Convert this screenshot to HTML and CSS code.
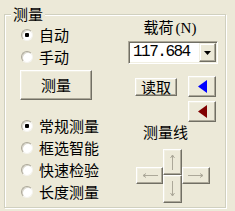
FILE: index.html
```html
<!DOCTYPE html>
<html>
<head>
<meta charset="utf-8">
<link rel="stylesheet" href="styles.css">
</head>
<body>
<div class="group">
  <span class="legend">测量</span>
  <div class="cols">
    <div class="left">
      <label class="opt"><span class="radio on"></span><span>自动</span></label>
      <label class="opt"><span class="radio"></span><span>手动</span></label>
      <div class="btn measure">测量</div>
      <div class="modes">
        <label class="opt"><span class="radio on"></span><span>常规测量</span></label>
        <label class="opt"><span class="radio"></span><span>框选智能</span></label>
        <label class="opt"><span class="radio"></span><span>快速检验</span></label>
        <label class="opt"><span class="radio"></span><span>长度测量</span></label>
      </div>
    </div>
    <div class="right">
      <div class="load-label">载荷<span class="latin">(N)</span></div>
      <div class="combo">
        <span class="combo-val">117.684</span>
        <span class="combo-btn"><svg width="7" height="4" viewBox="0 0 7 4"><path d="M0 0H7L3.5 4Z" fill="#000"/></svg></span>
      </div>
      <div class="read-row">
        <div class="btn read">读取</div>
        <div class="btn arrow"><svg width="9" height="13" viewBox="0 0 9 13"><path d="M0 6.5L9 0V13Z" fill="#0000ff"/></svg></div>
      </div>
      <div class="btn arrow red"><svg width="9" height="13" viewBox="0 0 9 13"><path d="M0 6.5L9 0V13Z" fill="#800000"/></svg></div>
      <div class="line-label">测量线</div>
      <div class="cross">
        <div class="btn up"><svg width="5" height="16" viewBox="0 0 5 16"><path d="M2.5 1V16M0.5 4L2.5 1L4.5 4" stroke="#aca899" fill="none" stroke-width="1"/></svg></div>
        <div class="btn lt"><svg width="16" height="5" viewBox="0 0 16 5"><path d="M1 2.5H16M4 0.5L1 2.5L4 4.5" stroke="#aca899" fill="none" stroke-width="1"/></svg></div>
        <div class="btn rt"><svg width="16" height="5" viewBox="0 0 16 5"><path d="M0 2.5H15M12 0.5L15 2.5L12 4.5" stroke="#aca899" fill="none" stroke-width="1"/></svg></div>
        <div class="btn dn"><svg width="5" height="16" viewBox="0 0 5 16"><path d="M2.5 0V15M0.5 12L2.5 15L4.5 12" stroke="#aca899" fill="none" stroke-width="1"/></svg></div>
      </div>
    </div>
  </div>
</div>
</body>
</html>
```
FILE: styles.css
```css
html, body {
  margin: 0;
  padding: 0;
  background: #ece9d8;
}
body {
  width: 235px;
  height: 211px;
  padding: 14px 0 0 4px;
  box-sizing: border-box;
  font-family: "Noto Sans CJK SC", "Noto Sans", sans-serif;
  font-size: 15px;
  color: #000;
  overflow: hidden;
}
.group {
  position: relative;
  width: 222px;
  height: 194px;
  box-sizing: border-box;
  border: 1px solid #d0d0bf;
  box-shadow: inset 1px 1px 0 #fff, 1px 1px 0 #fff;
}
.legend {
  position: absolute;
  top: -10px;
  left: 6px;
  padding: 0 2px;
  line-height: 18px;
  background: #ece9d8;
}
.cols {
  display: flex;
}
.left {
  width: 115px;
  padding-top: 9px;
  display: flex;
  flex-direction: column;
}
.opt {
  height: 22px;
  display: flex;
  align-items: center;
  padding-left: 16px;
  gap: 6px;
  line-height: 18px;
}
.radio {
  position: relative;
  width: 10px;
  height: 10px;
  border-radius: 50%;
  background: #fff;
  border: 1px solid;
  border-color: #aca899 #f4f3ee #f4f3ee #aca899;
  box-shadow: inset 1px 1px 0 #d8d6cb;
  flex: none;
}
.radio.on::after {
  content: "";
  position: absolute;
  left: 3px;
  top: 3px;
  width: 4px;
  height: 4px;
  border-radius: 1px;
  background: #000;
}
.btn {
  box-sizing: border-box;
  background: #ece9d8;
  border: 1px solid;
  border-color: #fff #716f64 #716f64 #fff;
  box-shadow: inset -1px -1px 0 #aca899, inset 1px 1px 0 #f1efe2;
  display: flex;
  align-items: center;
  justify-content: center;
}
.measure {
  margin: 2px 0 0 15px;
  width: 72px;
  height: 30px;
  line-height: 18px;
}
.modes {
  margin-top: 15px;
  display: flex;
  flex-direction: column;
}
.right {
  flex: 1;
  display: flex;
  flex-direction: column;
  align-items: flex-start;
}
.load-label {
  margin: 3px 0 0 8px;
  width: 84px;
  padding-right: 6px;
  text-align: center;
  line-height: 18px;
}
.latin {
  font-family: "Liberation Serif", serif;
  margin-left: 2px;
}
.combo {
  margin: 4px 0 0 8px;
  width: 90px;
  height: 23px;
  box-sizing: border-box;
  background: #fff;
  border: 1px solid;
  border-color: #aca899 #fff #fff #aca899;
  box-shadow: inset 1px 1px 0 #716f64, inset -1px -1px 0 #f1efe2;
  display: flex;
  align-items: center;
  padding: 1px 1px 1px 4px;
}
.combo-val {
  flex: 1;
  font-family: "Liberation Mono", monospace;
  font-size: 16px;
  letter-spacing: -1.5px;
  line-height: 19px;
}
.combo-btn {
  width: 17px;
  height: 19px;
  box-sizing: border-box;
  background: #ece9d8;
  border: 1px solid;
  border-color: #f1efe2 #716f64 #716f64 #f1efe2;
  box-shadow: inset -1px -1px 0 #aca899, inset 1px 1px 0 #fff;
  display: flex;
  align-items: center;
  justify-content: center;
}
.read-row {
  margin-top: 12px;
  display: flex;
  align-items: flex-start;
}
.read {
  margin: 2px 0 0 15px;
  width: 42px;
  height: 18px;
  line-height: 16px;
}
.arrow {
  margin-left: 11px;
  width: 28px;
  height: 21px;
}
.arrow.red {
  margin: 4px 0 0 68px;
}
.line-label {
  margin: 1px 0 0 23px;
  line-height: 18px;
}
.cross {
  margin: 8px 0 0 16px;
  display: grid;
  grid-template-columns: 27px 19px 28px;
  grid-template-rows: 18px 8px 9px 19px;
}
.cross .up { grid-column: 2; grid-row: 1 / 3; }
.cross .lt { grid-column: 1; grid-row: 2 / 4; }
.cross .rt { grid-column: 3; grid-row: 2 / 4; }
.cross .dn { grid-column: 2; grid-row: 3 / 5; }
```
